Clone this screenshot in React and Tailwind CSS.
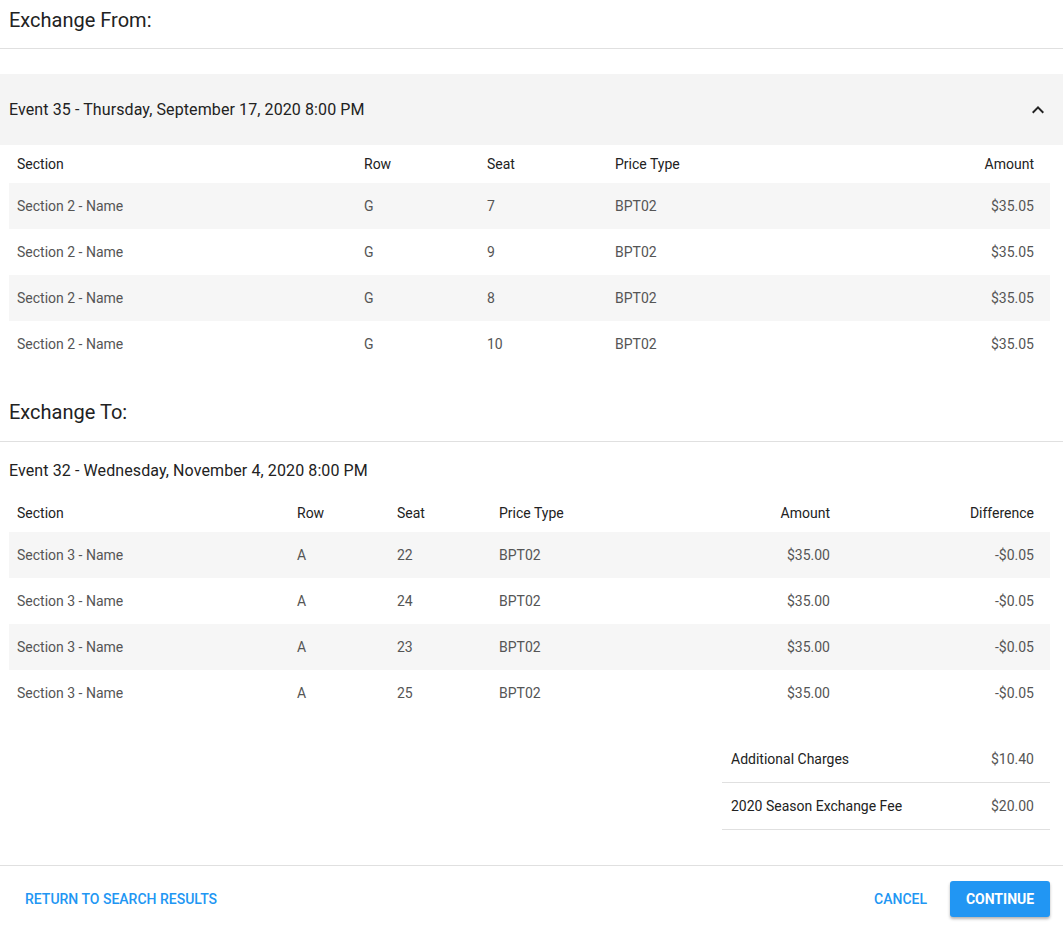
import React from 'react';

const fromRows = [
  { section: 'Section 2 - Name', row: 'G', seat: '7', priceType: 'BPT02', amount: '$35.05' },
  { section: 'Section 2 - Name', row: 'G', seat: '9', priceType: 'BPT02', amount: '$35.05' },
  { section: 'Section 2 - Name', row: 'G', seat: '8', priceType: 'BPT02', amount: '$35.05' },
  { section: 'Section 2 - Name', row: 'G', seat: '10', priceType: 'BPT02', amount: '$35.05' },
];

const toRows = [
  { section: 'Section 3 - Name', row: 'A', seat: '22', priceType: 'BPT02', amount: '$35.00', diff: '-$0.05' },
  { section: 'Section 3 - Name', row: 'A', seat: '24', priceType: 'BPT02', amount: '$35.00', diff: '-$0.05' },
  { section: 'Section 3 - Name', row: 'A', seat: '23', priceType: 'BPT02', amount: '$35.00', diff: '-$0.05' },
  { section: 'Section 3 - Name', row: 'A', seat: '25', priceType: 'BPT02', amount: '$35.00', diff: '-$0.05' },
];

const ChevronUp = () => (
  <svg width="24" height="24" viewBox="0 0 24 24" fill="#222">
    <path d="M7.41 15.41L12 10.83l4.59 4.58L18 14l-6-6-6 6z" />
  </svg>
);

const App = () => {
  return (
    <div className="min-h-screen bg-white text-[#222]" style={{ fontFamily: 'Roboto, "Noto Sans", Arial, sans-serif' }}>
      {/* Exchange From */}
      <div className="border-b border-[#e0e0e0] px-[9px] pt-[6px] pb-[14px]">
        <h2 className="text-[20px] leading-7 text-[#222]">Exchange From:</h2>
      </div>

      <div className="mt-[25px]">
        <div className="h-[71px] bg-[#f4f4f4] pl-[9px] pr-[13px] flex items-center justify-between">
          <span className="text-[16px] tracking-[0.1px] text-[#222]">Event 35 - Thursday, September 17, 2020 8:00 PM</span>
          <ChevronUp />
        </div>

        <div className="mx-[9px] mr-[13px]">
          <div className="grid grid-cols-[347px_123px_128px_1fr_200px] h-[38px] items-center text-[14px] text-[#222]">
            <div className="pl-2">Section</div>
            <div className="pl-2">Row</div>
            <div className="pl-2">Seat</div>
            <div className="pl-2">Price Type</div>
            <div className="pr-4 text-right">Amount</div>
          </div>
          {fromRows.map((r, i) => (
            <div
              key={i}
              className={`grid grid-cols-[347px_123px_128px_1fr_200px] h-[46px] items-center text-[14px] text-[#555] ${i % 2 === 0 ? 'bg-[#f6f6f6]' : 'bg-white'}`}
            >
              <div className="pl-2">{r.section}</div>
              <div className="pl-2">{r.row}</div>
              <div className="pl-2">{r.seat}</div>
              <div className="pl-2">{r.priceType}</div>
              <div className="pr-4 text-right">{r.amount}</div>
            </div>
          ))}
        </div>
      </div>

      {/* Exchange To */}
      <div className="mt-[31px] border-b border-[#e0e0e0] px-[9px] pb-[15px]">
        <h2 className="text-[20px] leading-7 text-[#222]">Exchange To:</h2>
      </div>

      <div className="px-[9px] mt-[17px] text-[16px] tracking-[0.1px] leading-6 text-[#222]">
        Event 32 - Wednesday, November 4, 2020 8:00 PM
      </div>

      <div className="ml-[9px] mr-[13px] mt-[11px]">
        <div className="grid grid-cols-[280px_100px_102px_205px_150px_1fr] h-[38px] items-center text-[14px] text-[#222]">
          <div className="pl-2">Section</div>
          <div className="pl-2">Row</div>
          <div className="pl-2">Seat</div>
          <div className="pl-2">Price Type</div>
          <div className="pr-4 text-right">Amount</div>
          <div className="pr-4 text-right">Difference</div>
        </div>
        {toRows.map((r, i) => (
          <div
            key={i}
            className={`grid grid-cols-[280px_100px_102px_205px_150px_1fr] h-[46px] items-center text-[14px] text-[#555] ${i % 2 === 0 ? 'bg-[#f6f6f6]' : 'bg-white'}`}
          >
            <div className="pl-2">{r.section}</div>
            <div className="pl-2">{r.row}</div>
            <div className="pl-2">{r.seat}</div>
            <div className="pl-2">{r.priceType}</div>
            <div className="pr-4 text-right">{r.amount}</div>
            <div className="pr-4 text-right">{r.diff}</div>
          </div>
        ))}
      </div>

      {/* Summary */}
      <div className="mt-[20px] flex justify-end mr-[13px]">
        <div className="w-[328px] text-[14px]">
          <div className="h-[47px] flex items-center justify-between border-b border-[#e0e0e0] pl-[9px] pr-4">
            <span className="text-[#222]">Additional Charges</span>
            <span className="text-[#555]">$10.40</span>
          </div>
          <div className="h-[47px] flex items-center justify-between border-b border-[#e0e0e0] pl-[9px] pr-4">
            <span className="text-[#222]">2020 Season Exchange Fee</span>
            <span className="text-[#555]">$20.00</span>
          </div>
        </div>
      </div>

      {/* Footer */}
      <div className="mt-[35px] border-t border-[#e0e0e0] flex items-center justify-between pl-[9px] pr-[13px] py-[15px]">
        <button className="h-9 px-4 text-[14px] font-medium text-[#2196f3] uppercase">
          Return to search results
        </button>
        <div className="flex items-center gap-[7px]">
          <button className="h-9 px-4 text-[14px] font-medium text-[#2196f3] uppercase">Cancel</button>
          <button className="h-9 w-[100px] rounded-[3px] bg-[#2196f3] text-[14px] font-bold text-white uppercase shadow-[0_2px_3px_rgba(0,0,0,0.3)]">
            Continue
          </button>
        </div>
      </div>
    </div>
  );
};

export default App;
